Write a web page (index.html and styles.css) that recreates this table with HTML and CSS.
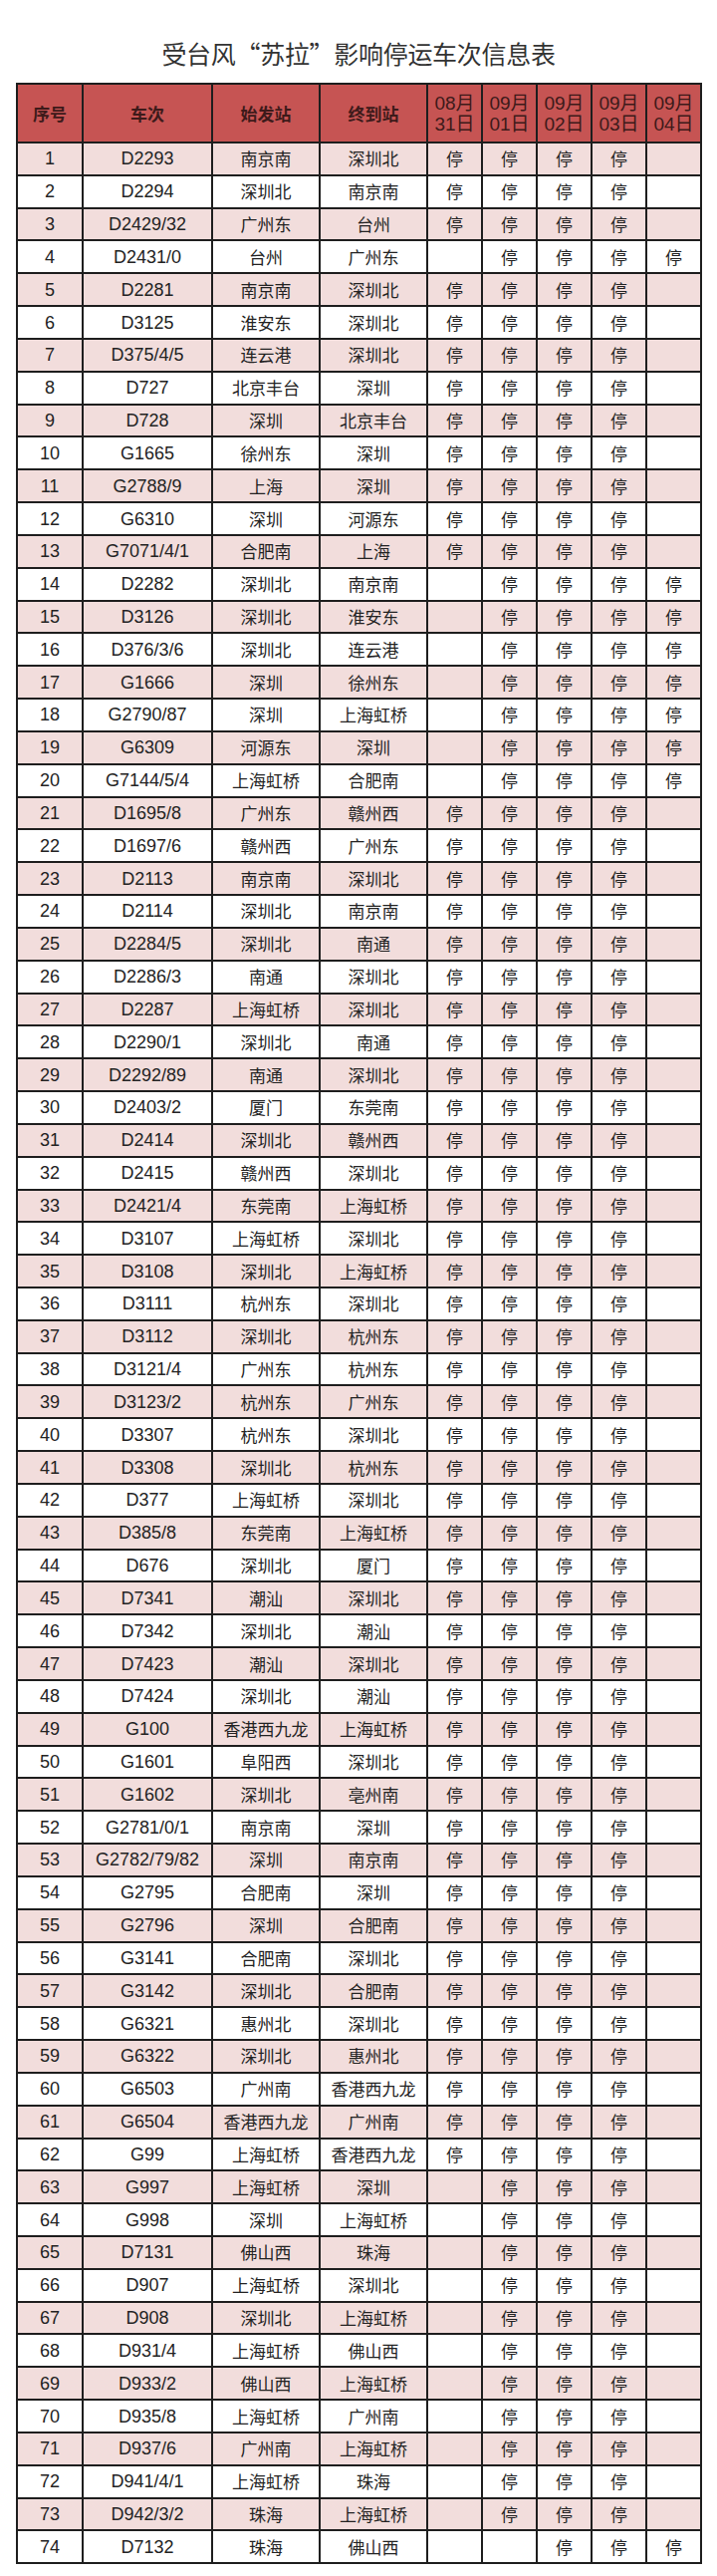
FILE: index.html
```html
<!DOCTYPE html>
<html lang="zh-CN">
<head>
<meta charset="utf-8">
<title>受台风“苏拉”影响停运车次信息表</title>
<link rel="stylesheet" href="styles.css">
</head>
<body>
<h1 class="title">受台风“苏拉”影响停运车次信息表</h1>
<table class="grid">
<colgroup>
<col class="c-no"><col class="c-train"><col class="c-st"><col class="c-st"><col class="c-day"><col class="c-day"><col class="c-day"><col class="c-day"><col class="c-day">
</colgroup>
<thead>
<tr><th class="h-cn">序号</th><th class="h-cn">车次</th><th class="h-cn">始发站</th><th class="h-cn">终到站</th><th class="h-date">08月<br>31日</th><th class="h-date">09月<br>01日</th><th class="h-date">09月<br>02日</th><th class="h-date">09月<br>03日</th><th class="h-date">09月<br>04日</th></tr>
</thead>
<tbody>
<tr><td>1</td><td>D2293</td><td>南京南</td><td>深圳北</td><td>停</td><td>停</td><td>停</td><td>停</td><td></td></tr>
<tr><td>2</td><td>D2294</td><td>深圳北</td><td>南京南</td><td>停</td><td>停</td><td>停</td><td>停</td><td></td></tr>
<tr><td>3</td><td>D2429/32</td><td>广州东</td><td>台州</td><td>停</td><td>停</td><td>停</td><td>停</td><td></td></tr>
<tr><td>4</td><td>D2431/0</td><td>台州</td><td>广州东</td><td></td><td>停</td><td>停</td><td>停</td><td>停</td></tr>
<tr><td>5</td><td>D2281</td><td>南京南</td><td>深圳北</td><td>停</td><td>停</td><td>停</td><td>停</td><td></td></tr>
<tr><td>6</td><td>D3125</td><td>淮安东</td><td>深圳北</td><td>停</td><td>停</td><td>停</td><td>停</td><td></td></tr>
<tr><td>7</td><td>D375/4/5</td><td>连云港</td><td>深圳北</td><td>停</td><td>停</td><td>停</td><td>停</td><td></td></tr>
<tr><td>8</td><td>D727</td><td>北京丰台</td><td>深圳</td><td>停</td><td>停</td><td>停</td><td>停</td><td></td></tr>
<tr><td>9</td><td>D728</td><td>深圳</td><td>北京丰台</td><td>停</td><td>停</td><td>停</td><td>停</td><td></td></tr>
<tr><td>10</td><td>G1665</td><td>徐州东</td><td>深圳</td><td>停</td><td>停</td><td>停</td><td>停</td><td></td></tr>
<tr><td>11</td><td>G2788/9</td><td>上海</td><td>深圳</td><td>停</td><td>停</td><td>停</td><td>停</td><td></td></tr>
<tr><td>12</td><td>G6310</td><td>深圳</td><td>河源东</td><td>停</td><td>停</td><td>停</td><td>停</td><td></td></tr>
<tr><td>13</td><td>G7071/4/1</td><td>合肥南</td><td>上海</td><td>停</td><td>停</td><td>停</td><td>停</td><td></td></tr>
<tr><td>14</td><td>D2282</td><td>深圳北</td><td>南京南</td><td></td><td>停</td><td>停</td><td>停</td><td>停</td></tr>
<tr><td>15</td><td>D3126</td><td>深圳北</td><td>淮安东</td><td></td><td>停</td><td>停</td><td>停</td><td>停</td></tr>
<tr><td>16</td><td>D376/3/6</td><td>深圳北</td><td>连云港</td><td></td><td>停</td><td>停</td><td>停</td><td>停</td></tr>
<tr><td>17</td><td>G1666</td><td>深圳</td><td>徐州东</td><td></td><td>停</td><td>停</td><td>停</td><td>停</td></tr>
<tr><td>18</td><td>G2790/87</td><td>深圳</td><td>上海虹桥</td><td></td><td>停</td><td>停</td><td>停</td><td>停</td></tr>
<tr><td>19</td><td>G6309</td><td>河源东</td><td>深圳</td><td></td><td>停</td><td>停</td><td>停</td><td>停</td></tr>
<tr><td>20</td><td>G7144/5/4</td><td>上海虹桥</td><td>合肥南</td><td></td><td>停</td><td>停</td><td>停</td><td>停</td></tr>
<tr><td>21</td><td>D1695/8</td><td>广州东</td><td>赣州西</td><td>停</td><td>停</td><td>停</td><td>停</td><td></td></tr>
<tr><td>22</td><td>D1697/6</td><td>赣州西</td><td>广州东</td><td>停</td><td>停</td><td>停</td><td>停</td><td></td></tr>
<tr><td>23</td><td>D2113</td><td>南京南</td><td>深圳北</td><td>停</td><td>停</td><td>停</td><td>停</td><td></td></tr>
<tr><td>24</td><td>D2114</td><td>深圳北</td><td>南京南</td><td>停</td><td>停</td><td>停</td><td>停</td><td></td></tr>
<tr><td>25</td><td>D2284/5</td><td>深圳北</td><td>南通</td><td>停</td><td>停</td><td>停</td><td>停</td><td></td></tr>
<tr><td>26</td><td>D2286/3</td><td>南通</td><td>深圳北</td><td>停</td><td>停</td><td>停</td><td>停</td><td></td></tr>
<tr><td>27</td><td>D2287</td><td>上海虹桥</td><td>深圳北</td><td>停</td><td>停</td><td>停</td><td>停</td><td></td></tr>
<tr><td>28</td><td>D2290/1</td><td>深圳北</td><td>南通</td><td>停</td><td>停</td><td>停</td><td>停</td><td></td></tr>
<tr><td>29</td><td>D2292/89</td><td>南通</td><td>深圳北</td><td>停</td><td>停</td><td>停</td><td>停</td><td></td></tr>
<tr><td>30</td><td>D2403/2</td><td>厦门</td><td>东莞南</td><td>停</td><td>停</td><td>停</td><td>停</td><td></td></tr>
<tr><td>31</td><td>D2414</td><td>深圳北</td><td>赣州西</td><td>停</td><td>停</td><td>停</td><td>停</td><td></td></tr>
<tr><td>32</td><td>D2415</td><td>赣州西</td><td>深圳北</td><td>停</td><td>停</td><td>停</td><td>停</td><td></td></tr>
<tr><td>33</td><td>D2421/4</td><td>东莞南</td><td>上海虹桥</td><td>停</td><td>停</td><td>停</td><td>停</td><td></td></tr>
<tr><td>34</td><td>D3107</td><td>上海虹桥</td><td>深圳北</td><td>停</td><td>停</td><td>停</td><td>停</td><td></td></tr>
<tr><td>35</td><td>D3108</td><td>深圳北</td><td>上海虹桥</td><td>停</td><td>停</td><td>停</td><td>停</td><td></td></tr>
<tr><td>36</td><td>D3111</td><td>杭州东</td><td>深圳北</td><td>停</td><td>停</td><td>停</td><td>停</td><td></td></tr>
<tr><td>37</td><td>D3112</td><td>深圳北</td><td>杭州东</td><td>停</td><td>停</td><td>停</td><td>停</td><td></td></tr>
<tr><td>38</td><td>D3121/4</td><td>广州东</td><td>杭州东</td><td>停</td><td>停</td><td>停</td><td>停</td><td></td></tr>
<tr><td>39</td><td>D3123/2</td><td>杭州东</td><td>广州东</td><td>停</td><td>停</td><td>停</td><td>停</td><td></td></tr>
<tr><td>40</td><td>D3307</td><td>杭州东</td><td>深圳北</td><td>停</td><td>停</td><td>停</td><td>停</td><td></td></tr>
<tr><td>41</td><td>D3308</td><td>深圳北</td><td>杭州东</td><td>停</td><td>停</td><td>停</td><td>停</td><td></td></tr>
<tr><td>42</td><td>D377</td><td>上海虹桥</td><td>深圳北</td><td>停</td><td>停</td><td>停</td><td>停</td><td></td></tr>
<tr><td>43</td><td>D385/8</td><td>东莞南</td><td>上海虹桥</td><td>停</td><td>停</td><td>停</td><td>停</td><td></td></tr>
<tr><td>44</td><td>D676</td><td>深圳北</td><td>厦门</td><td>停</td><td>停</td><td>停</td><td>停</td><td></td></tr>
<tr><td>45</td><td>D7341</td><td>潮汕</td><td>深圳北</td><td>停</td><td>停</td><td>停</td><td>停</td><td></td></tr>
<tr><td>46</td><td>D7342</td><td>深圳北</td><td>潮汕</td><td>停</td><td>停</td><td>停</td><td>停</td><td></td></tr>
<tr><td>47</td><td>D7423</td><td>潮汕</td><td>深圳北</td><td>停</td><td>停</td><td>停</td><td>停</td><td></td></tr>
<tr><td>48</td><td>D7424</td><td>深圳北</td><td>潮汕</td><td>停</td><td>停</td><td>停</td><td>停</td><td></td></tr>
<tr><td>49</td><td>G100</td><td>香港西九龙</td><td>上海虹桥</td><td>停</td><td>停</td><td>停</td><td>停</td><td></td></tr>
<tr><td>50</td><td>G1601</td><td>阜阳西</td><td>深圳北</td><td>停</td><td>停</td><td>停</td><td>停</td><td></td></tr>
<tr><td>51</td><td>G1602</td><td>深圳北</td><td>亳州南</td><td>停</td><td>停</td><td>停</td><td>停</td><td></td></tr>
<tr><td>52</td><td>G2781/0/1</td><td>南京南</td><td>深圳</td><td>停</td><td>停</td><td>停</td><td>停</td><td></td></tr>
<tr><td>53</td><td>G2782/79/82</td><td>深圳</td><td>南京南</td><td>停</td><td>停</td><td>停</td><td>停</td><td></td></tr>
<tr><td>54</td><td>G2795</td><td>合肥南</td><td>深圳</td><td>停</td><td>停</td><td>停</td><td>停</td><td></td></tr>
<tr><td>55</td><td>G2796</td><td>深圳</td><td>合肥南</td><td>停</td><td>停</td><td>停</td><td>停</td><td></td></tr>
<tr><td>56</td><td>G3141</td><td>合肥南</td><td>深圳北</td><td>停</td><td>停</td><td>停</td><td>停</td><td></td></tr>
<tr><td>57</td><td>G3142</td><td>深圳北</td><td>合肥南</td><td>停</td><td>停</td><td>停</td><td>停</td><td></td></tr>
<tr><td>58</td><td>G6321</td><td>惠州北</td><td>深圳北</td><td>停</td><td>停</td><td>停</td><td>停</td><td></td></tr>
<tr><td>59</td><td>G6322</td><td>深圳北</td><td>惠州北</td><td>停</td><td>停</td><td>停</td><td>停</td><td></td></tr>
<tr><td>60</td><td>G6503</td><td>广州南</td><td>香港西九龙</td><td>停</td><td>停</td><td>停</td><td>停</td><td></td></tr>
<tr><td>61</td><td>G6504</td><td>香港西九龙</td><td>广州南</td><td>停</td><td>停</td><td>停</td><td>停</td><td></td></tr>
<tr><td>62</td><td>G99</td><td>上海虹桥</td><td>香港西九龙</td><td>停</td><td>停</td><td>停</td><td>停</td><td></td></tr>
<tr><td>63</td><td>G997</td><td>上海虹桥</td><td>深圳</td><td></td><td>停</td><td>停</td><td>停</td><td></td></tr>
<tr><td>64</td><td>G998</td><td>深圳</td><td>上海虹桥</td><td></td><td>停</td><td>停</td><td>停</td><td></td></tr>
<tr><td>65</td><td>D7131</td><td>佛山西</td><td>珠海</td><td></td><td>停</td><td>停</td><td>停</td><td></td></tr>
<tr><td>66</td><td>D907</td><td>上海虹桥</td><td>深圳北</td><td></td><td>停</td><td>停</td><td>停</td><td></td></tr>
<tr><td>67</td><td>D908</td><td>深圳北</td><td>上海虹桥</td><td></td><td>停</td><td>停</td><td>停</td><td></td></tr>
<tr><td>68</td><td>D931/4</td><td>上海虹桥</td><td>佛山西</td><td></td><td>停</td><td>停</td><td>停</td><td></td></tr>
<tr><td>69</td><td>D933/2</td><td>佛山西</td><td>上海虹桥</td><td></td><td>停</td><td>停</td><td>停</td><td></td></tr>
<tr><td>70</td><td>D935/8</td><td>上海虹桥</td><td>广州南</td><td></td><td>停</td><td>停</td><td>停</td><td></td></tr>
<tr><td>71</td><td>D937/6</td><td>广州南</td><td>上海虹桥</td><td></td><td>停</td><td>停</td><td>停</td><td></td></tr>
<tr><td>72</td><td>D941/4/1</td><td>上海虹桥</td><td>珠海</td><td></td><td>停</td><td>停</td><td>停</td><td></td></tr>
<tr><td>73</td><td>D942/3/2</td><td>珠海</td><td>上海虹桥</td><td></td><td>停</td><td>停</td><td>停</td><td></td></tr>
<tr><td>74</td><td>D7132</td><td>珠海</td><td>佛山西</td><td></td><td></td><td>停</td><td>停</td><td>停</td></tr>
</tbody>
</table>
</body>
</html>
```

FILE: styles.css
```css
html, body {
  margin: 0;
  padding: 0;
  background: #ffffff;
}

body {
  font-family: "Liberation Sans", "Noto Sans CJK SC", sans-serif;
  color: #222222;
}

.title {
  margin: 0;
  padding-top: 38px;
  height: 30px;
  line-height: 30px;
  margin-bottom: 15px;
  text-align: center;
  font-family: "Noto Sans CJK SC", sans-serif;
  font-weight: 400;
  font-size: 25px;
  color: #333333;
  letter-spacing: -0.3px;
}

.grid {
  margin-left: 16px;
  width: 689px;
  table-layout: fixed;
  border-collapse: separate;
  border-spacing: 2px;
  background: #1e1e1e;
}

.c-no { width: 64px; }
.c-train { width: 128px; }
.c-st { width: 106px; }
.c-day { width: 53px; }

.grid th,
.grid td {
  padding: 0;
  text-align: center;
  vertical-align: middle;
  box-sizing: border-box;
  overflow: hidden;
  white-space: nowrap;
}

.grid th {
  height: 57px;
  background: #c65453;
  color: #3d1a1a;
}

.h-cn {
  font-family: "Noto Sans CJK SC", sans-serif;
  font-weight: 700;
  font-size: 17px;
}

.h-date {
  font-family: "Liberation Sans", "Noto Sans CJK SC", sans-serif;
  font-weight: 400;
  font-size: 19px;
  line-height: 21px;
}

.grid td {
  height: 30.84px;
  background: #ffffff;
  font-family: "Liberation Sans", "Noto Sans CJK SC", sans-serif;
  font-size: 18px;
  line-height: 20px;
  color: #232323;
}

.grid td:nth-child(n+3) {
  font-family: "Noto Sans CJK SC", sans-serif;
  font-size: 17px;
}

.grid tbody tr:nth-child(odd) td {
  background: #f2dddc;
}
```
